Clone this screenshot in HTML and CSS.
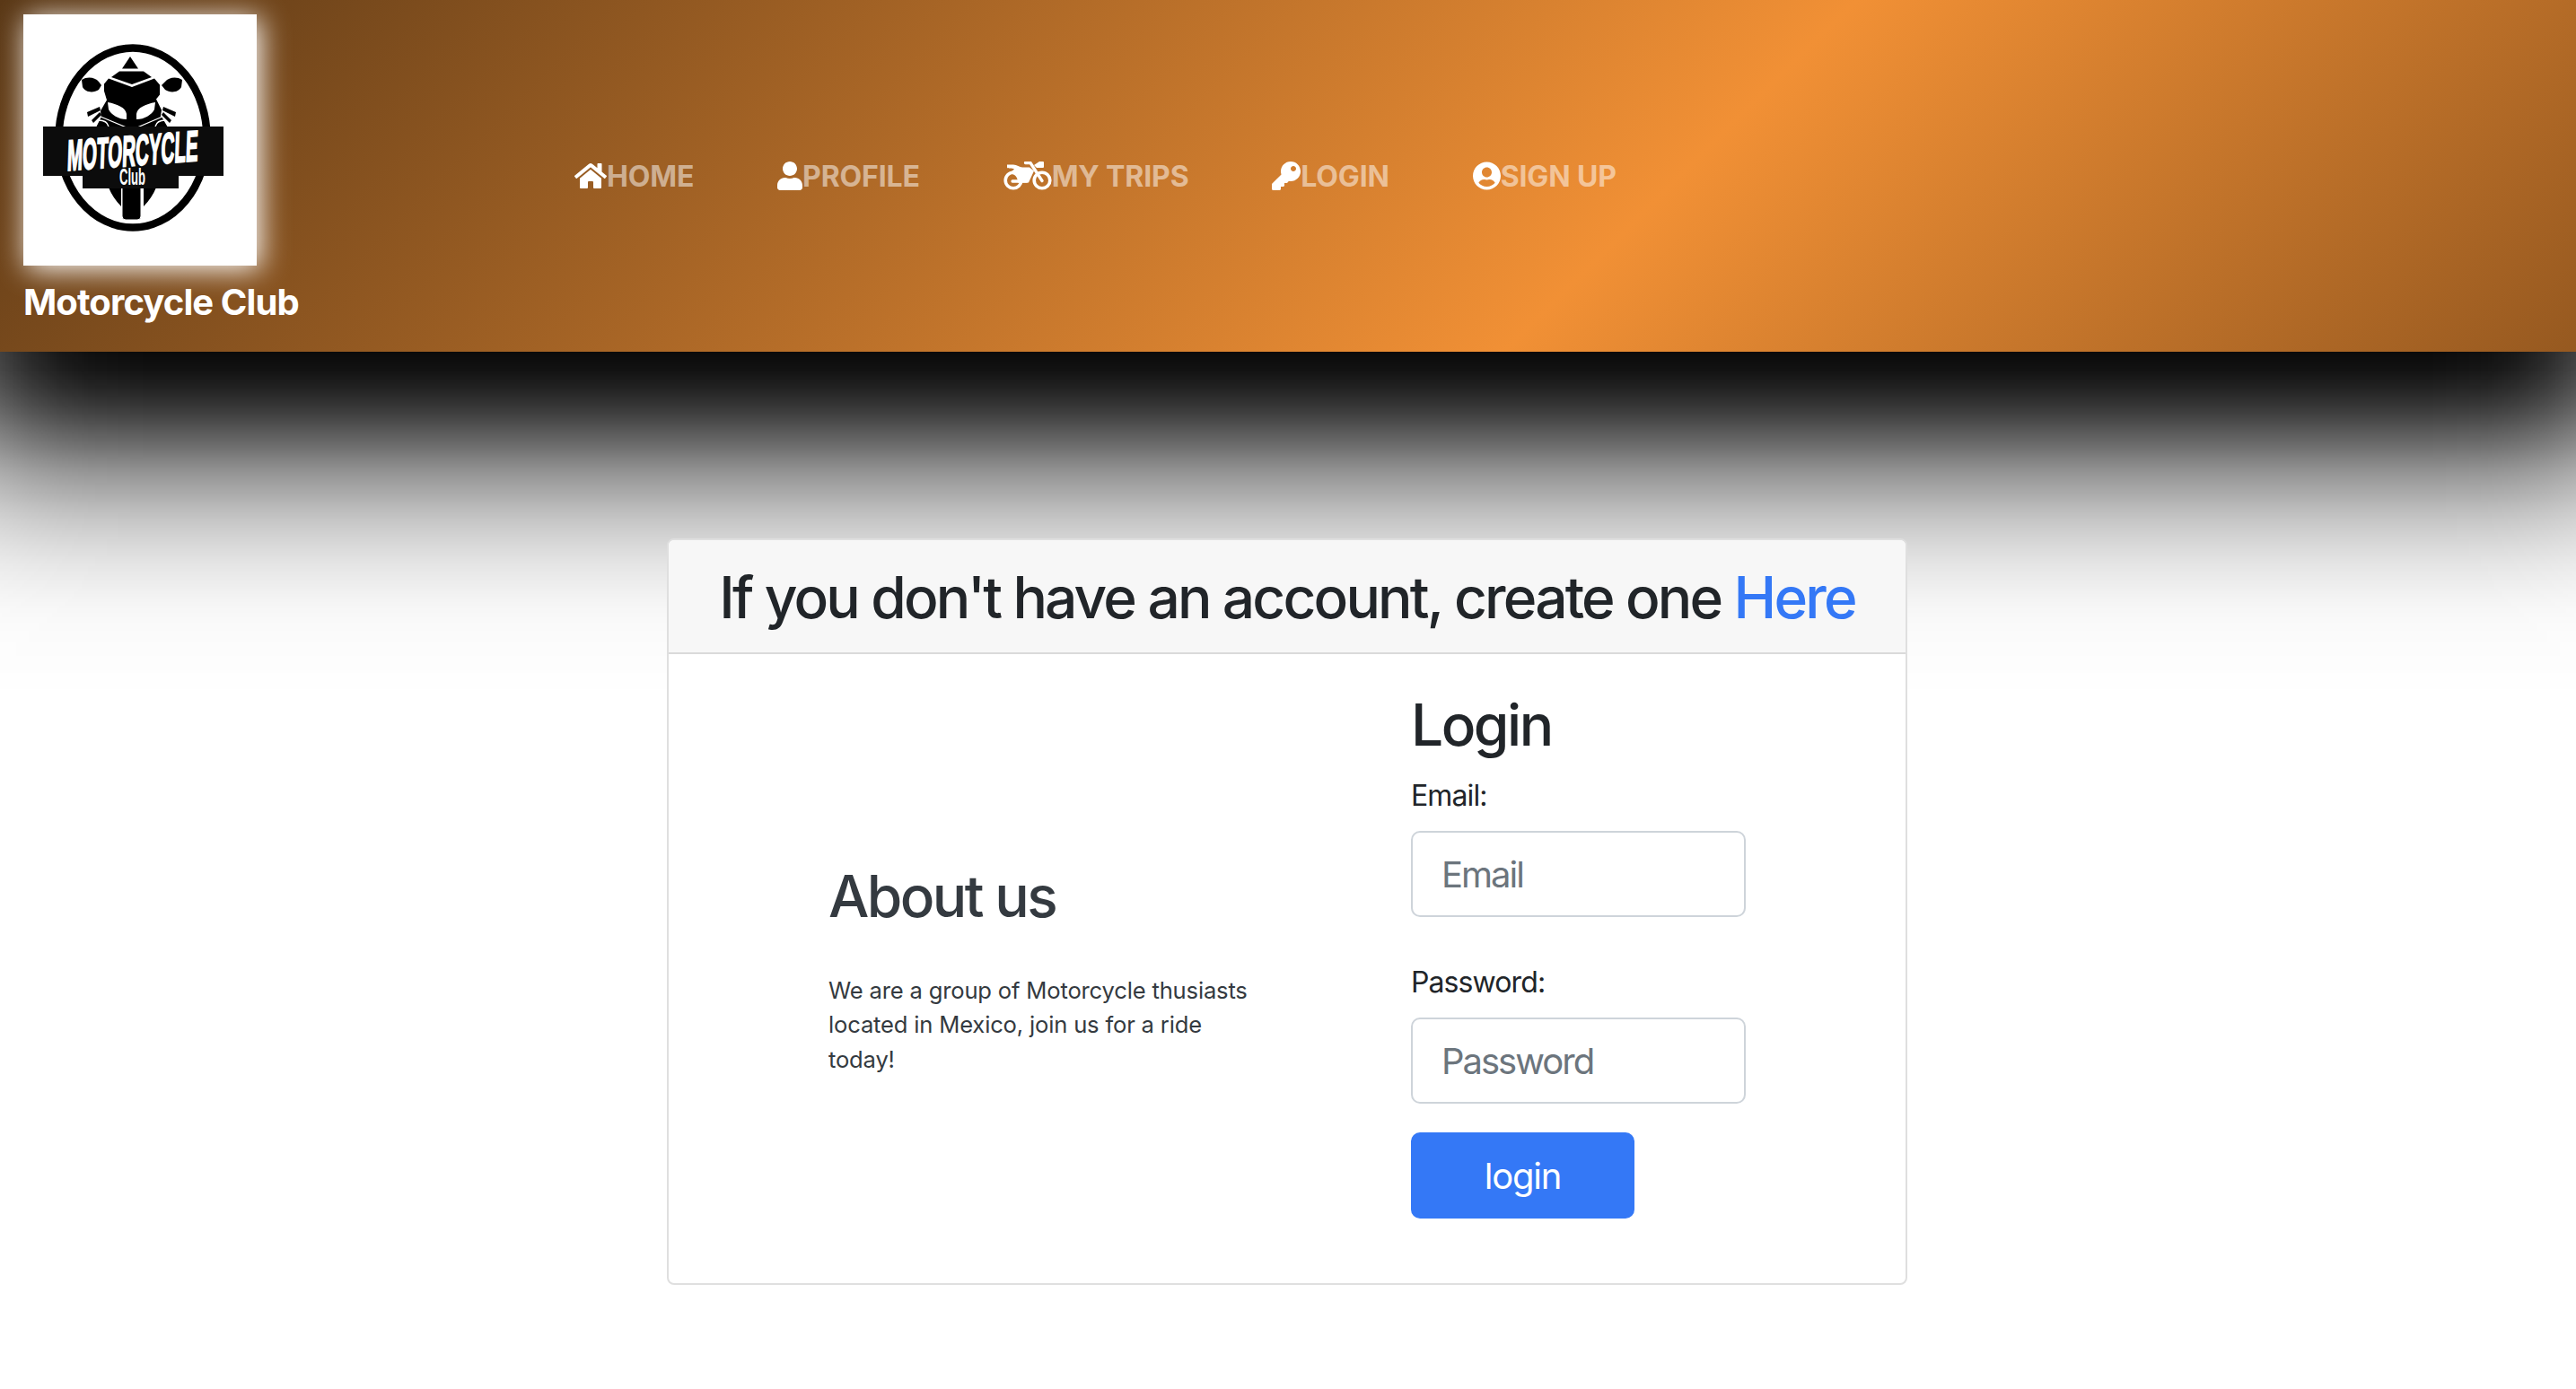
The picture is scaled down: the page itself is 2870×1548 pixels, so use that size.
FILE: index.html
```html
<!DOCTYPE html>
<html lang="en">
<head>
<meta charset="utf-8">
<title>Motorcycle Club</title>
<link rel="stylesheet" href="styles.css">
</head>
<body>
<header class="navbar">
  <a class="brand">
    <svg class="logo" viewBox="0 0 260 280">
      <rect width="260" height="280" fill="#fff"/>
      <ellipse cx="122" cy="137.500" rx="82.500" ry="100" fill="none" stroke="#000" stroke-width="8.500"/>
      <path d="M119 47l9 13.500h-18zM107 63.500h27l9 6.500-22 8-23-8z"/>
      <path d="M95 71.500l26 9.500 25-9.500 6 7v11l-4 5 6 12-2 13-31 15-34-15-1-12 7-12-3-10v-8z"/>
      <path d="M65 73c6-4 15-3 19 2l3 4-3 5c-6 4-15 3-18-3zM177 73c-6-4-15-3-19 2l-4 4 4 5c6 4 15 3 18-3z"/>
      <path d="M71 109l14-6 1 4-14 7zM76 118l9-9 2 3-9 9zM170 109l-14-6-1 4 14 7zM165 118l-9-9-2 3 9 9zM87 114l34 15 33-15 7 12H81z"/>
      <path fill="#fff" d="M94 98c11 2 20 6 21 13v6c-9 0-17-5-20-11zM147 98c-11 2-20 6-21 13v6c9 0 17-5 20-11z"/>
      <path d="M86 114l35 14.500 34-14.500M84 118c6 0 10 3 11 7M158 118c-6 0-10 3-11 7M103 194l7 12M140 194l-7 12" fill="none" stroke="#fff" stroke-width="1.300"/>
      <path d="M95 193h14v21q-9-9-14-21zM148 193h-14v21q9-9 14-21z"/>
      <path d="M110 193h21v32q0 4-4 4h-13q-4 0-4-4z" stroke="#fff" stroke-width="1"/>
      <path fill="#0c0c0c" d="M22 125h201v55h-50v14H66v-14H22z"/>
      <text class="logo-name" transform="translate(48.500 174) skewY(-4.300) skewX(-2) scale(.428 1)">MOTORCYCLE</text>
      <text class="logo-sub" x="107" y="190" textLength="29" lengthAdjust="spacingAndGlyphs">Club</text>
    </svg>
    <span class="brand-name">Motorcycle Club</span>
  </a>
  <nav class="links">
    <a class="link"><svg class="icon" width="36" height="32" viewBox="0 0 576 512"><path d="M280.370 148.260L96 300.110V464a16 16 0 0 0 16 16l112.060-.29a16 16 0 0 0 15.920-16V368a16 16 0 0 1 16-16h64a16 16 0 0 1 16 16v95.640a16 16 0 0 0 16 16.050L464 480a16 16 0 0 0 16-16V300L295.670 148.260a12.190 12.190 0 0 0-15.300 0zM571.600 251.470L488 182.560V44.050a12 12 0 0 0-12-12h-56a12 12 0 0 0-12 12v72.610L318.470 43a48 48 0 0 0-61 0L4.340 251.470a12 12 0 0 0-1.600 16.900l25.500 31A12 12 0 0 0 45.150 301l235.220-193.740a12.190 12.190 0 0 1 15.300 0L530.900 301a12 12 0 0 0 16.900-1.600l25.500-31a12 12 0 0 0-1.700-16.930z"/></svg>HOME</a>
    <a class="link"><svg class="icon" width="28" height="32" viewBox="0 0 448 512"><path d="M224 256c70.700 0 128-57.300 128-128S294.700 0 224 0 96 57.300 96 128s57.300 128 128 128zm89.600 32h-16.700c-22.200 10.200-46.900 16-72.900 16s-50.600-5.800-72.900-16h-16.700C60.200 288 0 348.200 0 422.400V464c0 26.500 21.500 48 48 48h352c26.500 0 48-21.500 48-48v-41.600c0-74.200-60.200-134.400-134.400-134.400z"/></svg>PROFILE</a>
    <a class="link"><svg class="icon" width="54" height="32" viewBox="0 0 54 32"><g fill="none" stroke="#fff" stroke-width="3.600"><circle cx="11" cy="21" r="8.800"/><circle cx="43" cy="21" r="8.800"/></g><path fill="none" stroke="#fff" stroke-width="3.300" stroke-linecap="round" d="M24.500 1.500h5.500l13 20M10 22h16"/><path d="M4 3.500h7c4 0 7 3 10 3h8l5 4-6 13H16c0-6-3-10-10-10l6-5c-2-1.500-8 0-8-2zM34 4l6-4h4q1 0 1 1v5q0 1-1 1h-7z"/></svg>MY TRIPS</a>
    <a class="link"><svg class="icon" width="32" height="32" viewBox="0 0 512 512"><path d="M512 176.001C512 273.203 433.202 352 336 352c-11.220 0-22.190-1.062-32.827-3.069l-24.012 27.014A23.999 23.999 0 0 1 261.223 384H224v40c0 13.255-10.745 24-24 24h-40v40c0 13.255-10.745 24-24 24H24c-13.255 0-24-10.745-24-24v-78.059c0-6.365 2.529-12.470 7.029-16.971l161.802-161.802C163.108 213.814 160 195.271 160 176 160 78.798 238.797.001 335.999 0 433.488-.001 512 78.511 512 176.001zM336 128c0 26.510 21.490 48 48 48s48-21.490 48-48-21.490-48-48-48-48 21.490-48 48z"/></svg>LOGIN</a>
    <a class="link"><svg class="icon" width="31" height="32" viewBox="0 0 496 512"><path d="M248 8C111 8 0 119 0 256s111 248 248 248 248-111 248-248S385 8 248 8zm0 96c48.600 0 88 39.400 88 88s-39.400 88-88 88-88-39.400-88-88 39.400-88 88-88zm0 344c-58.700 0-111.300-26.600-146.500-68.200 18.800-35.400 55.600-59.800 98.500-59.800 2.400 0 4.800.4 7.100 1.100 13 4.200 26.600 6.900 40.900 6.900 14.300 0 28-2.700 40.900-6.900 2.300-.7 4.700-1.100 7.100-1.100 42.900 0 79.700 24.400 98.500 59.800C359.300 421.400 306.700 448 248 448z"/></svg>SIGN UP</a>
  </nav>
</header>
<main class="card">
  <h1 class="card-header">If you don't have an account, create one <a class="here">Here</a></h1>
  <div class="card-body">
    <section class="about">
      <h2 class="about-title">About us</h2>
      <p class="about-text">We are a group of Motorcycle thusiasts<br>located in Mexico, join us for a ride<br>today!</p>
    </section>
    <form class="login">
      <h2 class="login-title">Login</h2>
      <label class="label" for="email">Email:</label>
      <input class="input" id="email" type="email" placeholder="Email">
      <label class="label" for="password">Password:</label>
      <input class="input" id="password" type="password" placeholder="Password">
      <button class="button" type="button">login</button>
    </form>
  </div>
</main>
</body>
</html>
```
FILE: styles.css
```css
* { box-sizing: border-box; }
body {
  margin: 0;
  height: 1548px;
  overflow: hidden;
  background: #fff;
  color: #212529;
  font-family: Inter, "Liberation Sans", sans-serif;
}
h1, h2, p { margin: 0; font-weight: 500; }
.navbar {
  position: relative;
  display: flex;
  height: 392px;
  padding: 16px 26px;
  background: linear-gradient(135deg, #5a3816 0%, #f19035 63.400%, #965920 100%);
}
/* Deep soft shadow falling below the bar, fading towards both sides */
.navbar::after {
  content: "";
  position: absolute;
  z-index: -1;
  top: 100%;
  left: 0;
  right: 0;
  height: 385px;
  background: linear-gradient(
    rgba(0, 0, 0, .960) 0, rgba(0, 0, 0, .930) 20px, rgba(0, 0, 0, .875) 38px,
    rgba(0, 0, 0, .810) 55px, rgba(0, 0, 0, .745) 70px, rgba(0, 0, 0, .655) 88px,
    rgba(0, 0, 0, .575) 104px, rgba(0, 0, 0, .485) 121px, rgba(0, 0, 0, .405) 138px,
    rgba(0, 0, 0, .340) 155px, rgba(0, 0, 0, .280) 171px, rgba(0, 0, 0, .225) 188px,
    rgba(0, 0, 0, .177) 205px, rgba(0, 0, 0, .137) 221px, rgba(0, 0, 0, .102) 238px,
    rgba(0, 0, 0, .075) 255px, rgba(0, 0, 0, .051) 271px, rgba(0, 0, 0, .033) 288px,
    rgba(0, 0, 0, .021) 305px, rgba(0, 0, 0, .010) 330px, rgba(0, 0, 0, 0) 385px);
  mask-image: linear-gradient(90deg,
    rgba(0, 0, 0, .780) 0, rgba(0, 0, 0, .880) 33px, rgba(0, 0, 0, .945) 67px,
    rgba(0, 0, 0, .980) 100px, #000 165px, #000 calc(100% - 165px),
    rgba(0, 0, 0, .980) calc(100% - 100px), rgba(0, 0, 0, .945) calc(100% - 67px),
    rgba(0, 0, 0, .880) calc(100% - 33px), rgba(0, 0, 0, .780) 100%);
}
.brand { display: flex; flex-direction: column; width: 614px; }
.logo { width: 260px; height: 280px; overflow: visible; box-shadow: 4px 4px 30px #fff; }
.logo-name { font: 700 48px "Liberation Sans", sans-serif; fill: #fff; stroke: #fff; stroke-width: 2px; }
.logo-sub { font: 700 25px "Liberation Sans", sans-serif; fill: #fff; }
.brand-name {
  margin-top: 16px;
  color: #fff;
  font-size: 40px;
  font-weight: 700;
  line-height: 50px;
  letter-spacing: -.900px;
  white-space: nowrap;
}
.links { display: flex; align-items: flex-start; gap: 92.800px; padding-top: 156px; }
.link {
  display: flex;
  align-items: center;
  height: 48px;
  color: rgba(255, 255, 255, .5);
  font-size: 32px;
  font-weight: 700;
  letter-spacing: -.130px;
  white-space: nowrap;
}
.icon { fill: #fff; flex: none; }
.card {
  width: 1382px;
  height: 832px;
  margin: 208px 0 0 743px;
  border: 2px solid #dfdfdf;
  border-radius: 8px;
  background: #fff;
}
.card-header {
  height: 127px;
  padding: 25px 0 24px;
  border-bottom: 2px solid #dadada;
  border-radius: 6px 6px 0 0;
  background: #f7f7f7;
  font-size: 64px;
  line-height: 77px;
  letter-spacing: -2.820px;
  text-align: center;
  white-space: nowrap;
}
.here { color: #3478f6; }
.card-body { display: flex; padding: 40px 0 0 178px; }
.about { width: 649px; padding-top: 191px; color: #343a40; }
.about-title { font-size: 64px; line-height: 77px; letter-spacing: -2.600px; }
.about-text { margin-top: 48px; font-size: 25.600px; font-weight: 400; line-height: 38.400px; letter-spacing: -.180px; white-space: nowrap; }
.login { display: flex; flex-direction: column; align-items: flex-start; }
.login-title { font-size: 64px; line-height: 77px; letter-spacing: -2.500px; }
.label { margin-top: 17px; font-size: 32px; line-height: 48px; letter-spacing: -.900px; }
.input {
  width: 373px;
  height: 96px;
  margin: 15px 0 32px;
  padding: 0 32px;
  border: 2px solid #ced4da;
  border-radius: 10px;
  font: 400 40px Inter, sans-serif;
  letter-spacing: -2px;
}
.input::placeholder { color: #6c757d; }
.button {
  width: 249px;
  height: 96px;
  border: 0;
  border-radius: 10px;
  background: #3478f6;
  color: #fff;
  font: 400 40px Inter, sans-serif;
  letter-spacing: -1.200px;
}
```
